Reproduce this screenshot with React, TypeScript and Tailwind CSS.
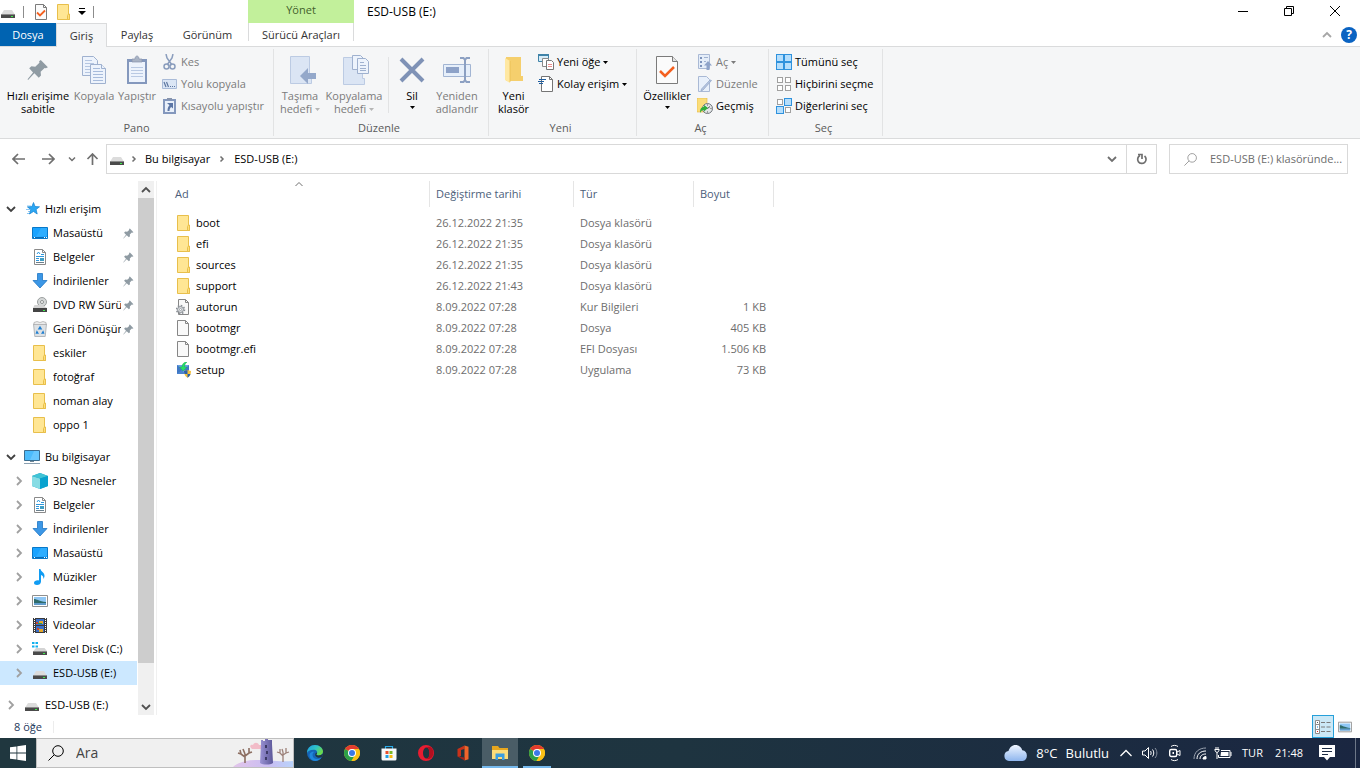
import React from 'react';

type IconProps = { className?: string };

/* ---------- File and tree icons ---------- */

const FolderIcon = ({ className = 'size-4' }: IconProps) => (
  <svg viewBox="0 0 16 16" className={className}>
    <path d="M1.500.5h11v10h1v5h-12z" fill="#ffe694" stroke="#e8bf4b" />
    <path d="M11.500 15.500v-4l1-1.500h1v5.500z" fill="#ffdf7b" stroke="#e8bf4b" />
  </svg>
);

const DriveIcon = ({ className = 'size-4' }: IconProps) => (
  <svg viewBox="0 0 16 16" className={className}>
    <path d="M4 6h8l2.500 4h-13z" fill="#dcdcdc" />
    <path d="M1 10h14v4H1z" fill="#4a4a4a" />
    <path d="M1 10h14v1H1z" fill="#8b8b8b" />
    <path d="M11 12h2v1h-2z" fill="#3ef04c" />
  </svg>
);

const LocalDiskIcon = () => (
  <svg viewBox="0 0 16 16" className="size-4">
    <path d="M0 1h2.500v2H0zM3.500 1H6v2H3.500zM0 4.500h2.500v2H0zM3.500 4.500H6v2H3.500z" fill="#12b0ee" />
    <path d="M4 7h8.500L15 10H1.500z" fill="#d4d4d4" />
    <path d="M1 10h14v4H1z" fill="#4a4a4a" />
    <path d="M1 10h14v1H1z" fill="#8b8b8b" />
    <path d="M11 12h2v1h-2z" fill="#3ef04c" />
  </svg>
);

const DvdIcon = () => (
  <svg viewBox="0 0 16 16" className="size-4">
    <circle cx="10" cy="5" r="4.500" fill="#d5d8d8" stroke="#9b9f9f" />
    <circle cx="10" cy="5" r="1.500" fill="#fff" stroke="#8d9191" />
    <path d="M2.500 8h8L15 11H1z" fill="#d4d4d4" />
    <path d="M1 11h14v4H1z" fill="#444" />
    <path d="M11 13h2v1h-2z" fill="#3ef04c" />
  </svg>
);

const StarIcon = () => (
  <svg viewBox="0 0 16 16" className="size-4">
    <path d="M3 5h4M2 8.500h4M3 12.500h3M4 10.500h2" stroke="#8cc8f3" />
    <path d="M9.500 1.500l1.500 4 4.500.3-3.400 2.700 1.100 4.500-3.700-2.500-4 2.500 1.300-4.500L3.500 6l4.400-.4z" fill="#2ba7f3" stroke="#1380d0" strokeWidth=".7" />
  </svg>
);

const DesktopIcon = () => (
  <svg viewBox="0 0 16 16" className="size-4">
    <path d="M.5 2.500h15v11H.5z" fill="#19a3ff" stroke="#0878c8" />
    <path d="M9 3h6v8L4 12z" fill="#3bb4ff" opacity=".6" />
    <path d="M1 12h14v1H1z" fill="#0a6bb5" />
    <path d="M2 12h1v1H2zM12 12h1v1h-1zM14 12h1v1h-1z" fill="#fff" />
  </svg>
);

const DocumentIcon = () => (
  <svg viewBox="0 0 16 16" className="size-4">
    <path d="M2.500.5h8l3 3v12h-11z" fill="#fff" stroke="#8a8a8a" />
    <path d="M10.500.5v3h3" fill="none" stroke="#8a8a8a" />
    <path d="M5 5l1.500-2L8 5M9 5.500h3M4 7.500h8M4 9.500h3M4 11.500h3" fill="none" stroke="#2f97dc" />
    <path d="M8 9h4v3H8z" fill="#3f9ec4" />
    <path d="M4 13.500h8" stroke="#6b7f8c" />
  </svg>
);

const DownloadIcon = () => (
  <svg viewBox="0 0 16 16" className="size-4">
    <path d="M5.500.5h5v7h4.500L8 15 1 7.500h4.500z" fill="#3c97e6" stroke="#1f76c4" strokeWidth=".8" />
  </svg>
);

const RecycleIcon = () => (
  <svg viewBox="0 0 16 16" className="size-4">
    <path d="M1.500 3h13l-1.300 12.500H2.800z" fill="#dde1e4" stroke="#a4aaaf" strokeWidth=".8" />
    <path d="M2 1.500l3-1 3 1 3-1 3 1v2H2z" fill="#ececec" stroke="#a8a8a8" strokeWidth=".7" />
    <path d="M8 4.800l2.300 3.700H5.700z" fill="#1f7fd1" />
    <path d="M4.800 9.300l2.200 3.500H3.500zM11.200 9.300L9 12.800h3.500z" fill="#1f7fd1" />
  </svg>
);

const ComputerIcon = () => (
  <svg viewBox="0 0 16 16" className="size-4">
    <path d="M.5 1.500h15v10H.5z" fill="#4cbcfc" stroke="#3c6d8f" />
    <path d="M10 2h5v9H6z" fill="#7bd0ff" opacity=".6" />
    <path d="M6 12h4v1H6z" fill="#718796" />
    <path d="M0 14h16v1H0z" fill="#8ba0b1" />
  </svg>
);

const CubeIcon = () => (
  <svg viewBox="0 0 16 16" className="size-4">
    <path d="M8 0l8 3v10l-8 3-8-3V3z" fill="#1d9fc0" />
    <path d="M0 3l8 2.500V16l-8-3z" fill="#87dce4" />
    <path d="M0 3l8-3 8 3-8 2.500z" fill="#41c4d6" />
    <path d="M8 5.500L16 3v10l-8 3z" fill="#08a2cf" />
  </svg>
);

const MusicIcon = () => (
  <svg viewBox="0 0 16 16" className="size-4">
    <path d="M7 0h1.500c.2 2.600 4.500 3.500 4 7.200-.1 1-.6 2-1.200 2.800.5-2.200-.8-3.600-2.300-4v6.500C9 15 7 16 5 16s-3-1-3-2.300C2 12 4.500 11 7 11.500z" fill="#109cf3" />
  </svg>
);

const PictureIcon = ({ className = 'size-4' }: IconProps) => (
  <svg viewBox="0 0 16 16" className={className}>
    <path d="M.5 2.500h15v11H.5z" fill="#fff" stroke="#8f8f8f" />
    <path d="M2 4h12v8H2z" fill="#8fc7f5" />
    <path d="M2 6c3 0 5 2.500 12 3v1H2z" fill="#2f6c6b" />
    <path d="M2 10h12v2H2z" fill="#5f9bcb" />
  </svg>
);

const VideoIcon = () => (
  <svg viewBox="0 0 16 16" className="size-4">
    <path d="M1 1h14v15H1z" fill="#3b3b3b" />
    <path d="M2.500 1v15M13.500 1v15" stroke="#fff" strokeDasharray="1 1" />
    <path d="M4 2h8v6H4z" fill="#3a6fca" />
    <path d="M4 9h8v6H4z" fill="#3a6fca" />
    <path d="M7 4h4v3H7z" fill="#e6a829" />
    <path d="M6 6h4v1H6z" fill="#2b9a4c" />
    <path d="M7 12h4v3H7z" fill="#e6a829" />
    <path d="M4 5h2v2H4zM5 11h2v2H5z" fill="#c8452d" />
  </svg>
);

const FileIcon = () => (
  <svg viewBox="0 0 16 16" className="size-4">
    <path d="M1.500.5h8l3 3v12h-11z" fill="#f9f9f9" stroke="#868686" />
    <path d="M9.500.5v3h3" fill="none" stroke="#868686" />
  </svg>
);

const ConfigFileIcon = () => (
  <svg viewBox="0 0 16 16" className="size-4">
    <path d="M2.500.5h7l3 3v12h-10z" fill="#f9f9f9" stroke="#868686" />
    <path d="M9.500.5v3h3" fill="none" stroke="#868686" />
    <circle cx="4.500" cy="10.500" r="4" fill="none" stroke="#8b9096" strokeWidth="1.500" strokeDasharray="1.600 1.500" />
    <circle cx="4.500" cy="10.500" r="3" fill="#d9dcde" stroke="#8b9096" />
    <circle cx="4.500" cy="10.500" r="1" fill="#fff" stroke="#8b9096" strokeWidth=".7" />
  </svg>
);

const SetupIcon = () => (
  <svg viewBox="0 0 16 16" className="size-4">
    <path d="M1 3h12v9H1z" fill="#6aa0e2" />
    <path d="M1 3l6 5-6 4zM13 3L8 8l5 4z" fill="#3f77c4" />
    <path d="M1 12l5-4 3 4z" fill="#4b83cf" />
    <path d="M11 0C8 0 6 2 6 5H3.500L7 9l4-4H8.500c0-2 1-4 2.500-5z" fill="#27dd68" stroke="#12a74a" strokeWidth=".4" />
    <path d="M8 9c1.500 0 2.500-.5 3.500-1.200C12.500 8.500 13.500 9 15 9c0 3-1 5.500-3.500 6.800C9 14.500 8 12 8 9z" fill="#f5c13c" />
    <path d="M8 9c1.500 0 2.500-.5 3.500-1.200V12h-3C8.100 11 8 10 8 9zM11.500 12h3c-.6 1.700-1.600 3-3 3.800z" fill="#2a62ac" />
  </svg>
);

const PinIcon = ({ className = 'size-3' }: IconProps) => (
  <svg viewBox="0 0 20 20" className={className} fill="#8f9ba3">
    <path d="M12.500 1l6.500 6.500-1.800 1-1.200-.4-3.600 3.500.3 3.400-2 2-4-4L1 19 .5 18.500l5-6.300-3.500-3.700 2-2 3.500.5L11.300 3.500 11 2z" />
  </svg>
);

const Chevron = ({ className = '' }: IconProps) => (
  <svg viewBox="0 0 10 10" className={`size-[10px] shrink-0 ${className}`} fill="none" stroke="currentColor" strokeWidth="1.800">
    <path d="M3 1l4 4-4 4" />
  </svg>
);

const Caret = ({ className = '' }: IconProps) => (
  <svg viewBox="0 0 5 3" className={`inline-block h-[3px] w-[5px] ${className}`} fill="currentColor">
    <path d="M0 0h5L2.500 3z" />
  </svg>
);

/* ---------- Ribbon icons ---------- */

const CheckDocIcon = ({ className = 'h-8 w-6' }: IconProps) => (
  <svg viewBox="0 0 24 32" className={className}>
    <path d="M1.500 2.500h16l5 5v22h-21z" fill="#fbfbfb" stroke="#7b7b7b" />
    <path d="M17.500 2.500v5h5" fill="#e4e4e4" stroke="#7b7b7b" />
    <path d="M5 17l5 5 9-9" fill="none" stroke="#f4601f" strokeWidth="2.500" />
  </svg>
);

const SmallCheckDocIcon = () => (
  <svg viewBox="0 0 14 16" className="h-4 w-[14px]">
    <path d="M1.500.5h8l3 3v12h-11z" fill="#fbfbfb" stroke="#7b7b7b" />
    <path d="M9.500.5v3h3" fill="none" stroke="#7b7b7b" />
    <path d="M3 8.500l3 3 5-5" fill="none" stroke="#f4601f" strokeWidth="1.800" />
  </svg>
);

const CopyIcon = () => (
  <svg viewBox="0 0 26 30" className="h-[30px] w-[26px]" fill="#edf3fc" stroke="#9fb1cf">
    <path d="M1.500 1.500h11l4 4v15h-15z" />
    <path d="M4 5.500h7M4 8.500h9M4 11.500h9M4 14.500h9M4 17.500h9" stroke="#b5c6e1" />
    <path d="M9.500 9.500h11l4 4v15h-15z" />
    <path d="M20.500 9.500v4h4" />
    <path d="M12 13.500h7M12 16.500h10M12 19.500h10M12 22.500h10M12 25.500h10" stroke="#a7bbdb" />
  </svg>
);

const PasteIcon = () => (
  <svg viewBox="0 0 22 30" className="h-[30px] w-[22px]">
    <path d="M1 4h20v25H1z" fill="#8498bd" />
    <path d="M3 7h16v20H3z" fill="#edf3fc" />
    <path d="M5 12.500h12M5 15.500h12M5 18.500h12M5 21.500h12" stroke="#b9c9e3" />
    <path d="M6 7V4h3c0-4 4-4 4 0h3v3z" fill="#a9b3c4" stroke="#8794ad" strokeWidth=".7" />
  </svg>
);

const CutIcon = () => (
  <svg viewBox="0 0 16 16" className="size-4" fill="none" stroke="#8a9dbd" strokeWidth="1.500">
    <path d="M4 0l1 4 5 7M11 0l-1 4-5 7" />
    <circle cx="4.500" cy="12.500" r="2.500" />
    <circle cx="10.500" cy="12.500" r="2.500" />
  </svg>
);

const CopyPathIcon = () => (
  <svg viewBox="0 0 16 16" className="size-4">
    <path d="M.5 3.500h14v9H.5z" fill="#dbe6f5" stroke="#a9bbd8" />
    <path d="M2 6l2 5M4.500 6l2 5" stroke="#5d769f" strokeWidth="1.200" />
    <path d="M8 10h1v1H8zM10 10h1v1h-1zM12 10h1v1h-1z" fill="#5d769f" />
  </svg>
);

const PasteShortcutIcon = () => (
  <svg viewBox="0 0 16 16" className="size-4">
    <path d="M1 1h13v15H1z" fill="#8498bd" />
    <path d="M3 3h9v11H3z" fill="#e9f0fa" />
    <path d="M5 0h5v2H5z" fill="#8794ad" />
    <path d="M5 5h6v5.500L9.200 9C8 10 7.500 11 7.500 13H5.500c0-3 .8-4.500 2-5.700z" fill="#5c76a5" />
  </svg>
);

const MoveToIcon = () => (
  <svg viewBox="0 0 28 30" className="h-[30px] w-7">
    <path d="M2.500 1.500h19v21h2v6h-21z" fill="#dbe5f4" stroke="#bccbe3" />
    <path d="M28 18h-8v-5l-8 8 8 8v-5h8z" fill="#94a8ca" />
  </svg>
);

const CopyToIcon = () => (
  <svg viewBox="0 0 28 32" className="h-8 w-7">
    <path d="M1.500 3.500h19v21h2v6h-21z" fill="#dbe5f4" stroke="#bccbe3" />
    <path d="M10.500 1.500h8l3 3v11h-11z" fill="#edf3fc" stroke="#9fb1cf" />
    <path d="M15.500 4.500h8l3 3v12h-11z" fill="#edf3fc" stroke="#9fb1cf" />
    <path d="M18 8.500h4M18 11.500h6M18 14.500h6M18 16.500h6" stroke="#9fb1cf" />
  </svg>
);

const DeleteIcon = () => (
  <svg viewBox="0 0 26 26" className="size-[26px]">
    <path d="M2 2l22 22M24 2L2 24" stroke="#7f92b6" strokeWidth="4" />
  </svg>
);

const RenameIcon = () => (
  <svg viewBox="0 0 30 28" className="h-7 w-[30px]">
    <path d="M1.500 8.500h27v12h-27z" fill="#e6effa" stroke="#a2b5d3" />
    <path d="M4 11h13v6H4z" fill="#8da2c8" />
    <path d="M18 2h3.500l1.500 2 1.500-2H28M23 3v22M18 26h3.500l1.500-2 1.500 2H28" fill="none" stroke="#8ca0c2" strokeWidth="2" />
  </svg>
);

const NewFolderIcon = () => (
  <svg viewBox="0 0 20 30" className="h-[30px] w-5">
    <path d="M2 2h15v19h2v5H2z" fill="#f5cf6d" />
    <path d="M1 3l5 3v22l-5-3z" fill="#ffe8a2" />
    <path d="M6 6v21" stroke="#e7b94b" strokeWidth=".7" />
  </svg>
);

const NewItemIcon = () => (
  <svg viewBox="0 0 16 16" className="size-4">
    <path d="M.5.500h10v7H.5z" fill="#d6ecf8" stroke="#3f83a8" />
    <path d="M0 0h11v2H0z" fill="#3f83a8" />
    <path d="M4.500 4.500h6v8h-6z" fill="#fff" stroke="#8a8a8a" />
    <path d="M8.500 6.500h5l2 2v7h-7z" fill="#fff" stroke="#777" />
    <path d="M10 10.500h4M10 12.500h4" stroke="#ea8e8e" />
  </svg>
);

const EasyAccessIcon = () => (
  <svg viewBox="0 0 16 16" className="size-4">
    <path d="M3.500.5h8l3 3v12h-11z" fill="#fff" stroke="#757575" />
    <path d="M11.500.5v3h3" fill="none" stroke="#757575" />
    <path d="M1 3.500h7M0 5.500h6M1 7.500h4" stroke="#1f5e9f" strokeWidth="1.200" />
  </svg>
);

const OpenIcon = () => (
  <svg viewBox="0 0 16 16" className="size-4">
    <path d="M1.500.5h11v14h-11z" fill="#e4edf9" stroke="#a9b9d5" />
    <path d="M3 3h2v2H3zM3 7h2v2H3zM3 11h2v2H3z" fill="#7d93bb" />
    <path d="M7 3.500h4M7 7.500h2" stroke="#9fb1cf" />
    <path d="M9.500 16v-4.500H7L11 7l4 4.500h-2.500V16z" fill="#8ea3c9" />
  </svg>
);

const EditIcon = () => (
  <svg viewBox="0 0 16 16" className="size-4">
    <path d="M1.500.5h8l3 3v12h-11z" fill="#e8f0fb" stroke="#a9b9d5" />
    <path d="M14.500 4.500L6 14l-2 1 .5-2L13 4z" fill="#b7c6e0" stroke="#94a8ca" strokeWidth=".8" />
  </svg>
);

const HistoryIcon = () => (
  <svg viewBox="0 0 16 16" className="size-4">
    <path d="M0 0h10v9h2v5H0z" fill="#fbdd79" stroke="#e0b544" strokeWidth=".6" />
    <circle cx="10.500" cy="10.500" r="5" fill="#e3e6e8" stroke="#71777c" />
    <path d="M10.500 10.500l2.500-2M10.500 10.500L8 9M10.500 6.500v1M10.500 13.500v1M13.500 10.500h1" stroke="#555" />
    <path d="M3 15c0-4 1-6 4-6V7l4 3-4 3.500V12c-2 0-3 1-4 3z" fill="#2eae3a" />
  </svg>
);

const SelectGridIcon = ({ selected }: { selected: boolean[] }) => {
  const spots = [
    [1, 1],
    [9, 1],
    [1, 9],
    [9, 9],
  ];
  return (
    <svg viewBox="0 0 16 16" className="size-4">
      {spots.map(([x, y], i) =>
        selected[i] ? (
          <rect key={i} x={x - 0.5} y={y - 0.5} width="7" height="7" fill="#b5defc" stroke="#2f92dd" />
        ) : (
          <rect key={i} x={x + 0.5} y={y + 0.5} width="5" height="5" fill="#fff" stroke="#a0a0a0" />
        ),
      )}
    </svg>
  );
};

/* ---------- Taskbar icons ---------- */

const EdgeIcon = () => (
  <svg viewBox="0 0 16 16" className="size-4">
    <defs>
      <linearGradient id="edgeTop" x1="0" y1="0" x2="1" y2=".5">
        <stop offset="0" stopColor="#1f9fe0" />
        <stop offset=".55" stopColor="#2fc3c6" />
        <stop offset="1" stopColor="#6bdc4c" />
      </linearGradient>
    </defs>
    <circle cx="8" cy="8" r="8" fill="#1565b8" />
    <path d="M0 8C0 3.500 3.500 0 8 0s8 3 8 6.500c0 2.500-2 4-4.500 4-2 0-2.500-.8-1.700-1.700C11 7 9.500 4.800 6.500 4.800 3 4.800.5 6.500 0 8z" fill="url(#edgeTop)" />
    <path d="M6 8c-1.500 3 .8 6 4 6 2 0 3.500-.6 4.700-2-1.500 3-5 4.300-8 3.800C3.500 15 1.500 11 3 8.500 4 7 6 6.500 7.500 7 6.500 7.200 6.200 7.500 6 8z" fill="#1f88dc" />
    <path d="M9.800 8.800c-.8 1-.3 1.700 1.700 1.700 1.600 0 3.300-.7 4.500-2-.1 1.500-.5 2.500-1.300 3.500-3 1.500-6.500.3-6.500-2.200 0-1 .5-1.800 1.200-2.300.6.400.8.8.4 1.300z" fill="#203740" />
  </svg>
);

const ChromeIcon = () => (
  <svg viewBox="0 0 16 16" className="size-4">
    <circle cx="8" cy="8" r="8" fill="#fbc116" />
    <path d="M8 8L1.100 4A8 8 0 0 1 14.900 4z" fill="#e33b2e" />
    <path d="M8 8L1.100 4a8 8 0 0 0 6.400 12L11 9.800z" fill="#2b9f48" />
    <path d="M8 4h6.900a8 8 0 0 1-7.400 12L11.400 10z" fill="#fbc116" />
    <circle cx="8" cy="8" r="4" fill="#fff" />
    <circle cx="8" cy="8" r="3" fill="#3b78e7" />
  </svg>
);

const StoreIcon = () => (
  <svg viewBox="0 0 16 16" className="size-4">
    <path d="M4.500 4V1.500h7V4" fill="none" stroke="#29abe8" strokeWidth="1.200" />
    <path d="M.5 3.500h15V14a1.500 1.500 0 0 1-1.500 1.500H2A1.500 1.500 0 0 1 .5 14z" fill="#f6f8fa" />
    <path d="M4.500 6h3v3h-3z" fill="#e94f2c" />
    <path d="M8.500 6h3v3h-3z" fill="#7db928" />
    <path d="M4.500 10h3v3h-3z" fill="#20a0e6" />
    <path d="M8.500 10h3v3h-3z" fill="#fbb90f" />
  </svg>
);

const OperaIcon = () => (
  <svg viewBox="0 0 16 16" className="size-4">
    <path fillRule="evenodd" d="M8 0a8 8 0 1 0 0 16A8 8 0 0 0 8 0zm.5 2.500c2 0 3 2.500 3 5.500s-1 5.500-3 5.500S5 11 5 8s1.500-5.500 3.500-5.500z" fill="#e81c31" />
    <path d="M8.500 2.500C11 .8 13.500 2 14.500 4c1.500 3 1 7-1.500 9-1.500 1.300-3 1.300-4.500.5 2 0 3-2.500 3-5.500s-1-5.500-3-5.500z" fill="#b30f1f" />
  </svg>
);

const OfficeIcon = () => (
  <svg viewBox="0 0 16 16" className="size-4">
    <path d="M2.500 4L9.500.500V4L6 5v6l-2 1-1.500-.6z" fill="#c8321a" />
    <path d="M9.500.5l4 1.300v12.400l-4 1.300z" fill="#f0642a" />
    <path d="M2.500 11.400l7 1.100v3z" fill="#a3231b" />
  </svg>
);

const ExplorerIcon = () => (
  <svg viewBox="0 0 18 16" className="h-4 w-[18px]">
    <path d="M1 1h6l1.500 2H17v11H1z" fill="#e6a61e" />
    <path d="M1 5h16v9H1z" fill="#fddc78" />
    <path d="M4.500 8.500h9V15H11v-3H7v3H4.500z" fill="#3c9ee0" />
  </svg>
);

const SearchArt = () => (
  <svg viewBox="0 0 60 28" className="h-7 w-[60px] shrink-0">
    <defs>
      <linearGradient id="hill" x1="0" y1="0" x2="1" y2="0">
        <stop offset="0" stopColor="#e2c5ea" />
        <stop offset=".6" stopColor="#c9bdf2" />
        <stop offset="1" stopColor="#b9d3fb" />
      </linearGradient>
      <linearGradient id="tower" x1="0" y1="0" x2="1" y2="0">
        <stop offset="0" stopColor="#9a92d4" />
        <stop offset="1" stopColor="#5c5899" />
      </linearGradient>
    </defs>
    <path d="M0 28c4-4 12-7 24-7s20 2 36 1v6z" fill="url(#hill)" />
    <path d="M18 9c-2-2 0-4 2-3 1-3 5-3 6 0h4v4H19z" fill="#f2bcc8" />
    <path d="M28 1h2v1h2V0h3v1h2V1h2v4l1 19c-3 2-10 2-13 0l1-19z" fill="url(#tower)" />
    <path d="M32 6h2v3h-2zM33 12h2v3h-2zM32 18h2v3h-2z" fill="#3d3a66" />
    <path d="M12 24v-9M12 18l-4-3-3-1M8 15l-1-4M12 17l4-3 3-1M16 14V9M12 15l-2-5" fill="none" stroke="#8d6f62" strokeWidth="1.600" />
    <path d="M50 23V13M50 17l-3-3-3-1M47 14l0-4M50 16l3-2 3-1M53 14V9M50 13l-1-3" fill="none" stroke="#9c8078" strokeWidth="1.300" />
  </svg>
);

const CloudIcon = () => (
  <svg viewBox="0 0 24 16" className="h-4 w-6">
    <defs>
      <linearGradient id="cloud" x1="0" y1="0" x2="0" y2="1">
        <stop offset="0" stopColor="#eef5ff" />
        <stop offset="1" stopColor="#8fb6ee" />
      </linearGradient>
    </defs>
    <path d="M5 16a5 5 0 0 1-.5-9.900C5.500 2.500 8 0 11.500 0c3.500 0 6 2.300 6.800 5.200A5.500 5.500 0 0 1 18.500 16z" fill="url(#cloud)" />
  </svg>
);

const VolumeIcon = () => (
  <svg viewBox="0 0 18 16" className="h-4 w-[18px]" fill="none" stroke="#fff">
    <path d="M1.500 6v4h2.500l3.500 3.500v-11L4 6z" />
    <path d="M9.500 6c.8 1 .8 3 0 4M11.500 4.500c1.700 2 1.700 5 0 7" />
    <path d="M14 3c2.500 3 2.500 7 0 10" stroke="#8b94a2" />
  </svg>
);

const MeetIcon = () => (
  <svg viewBox="0 0 12 18" className="h-[18px] w-3" fill="none" stroke="#fff">
    <path d="M2 2.500c2-1.500 5-1.500 7 0M2 15.500c2 1.500 5 1.500 7 0" />
    <rect x=".7" y="5.500" width="7" height="7" rx="1.500" strokeWidth="1.400" />
    <path d="M8 8l3-1.500v5L8 10" />
    <path d="M3.500 8h1.500v2H3.500z" fill="#fff" stroke="none" />
  </svg>
);

const WifiIcon = () => (
  <svg viewBox="0 0 14 14" className="size-[14px]" fill="none" stroke="#fff">
    <path d="M1 13C1 6 6 2 13 2" stroke="#9aa3b0" />
    <path d="M4 13c0-5 3.500-8 9-8M7 13c0-3 2-5 6-5" />
    <path d="M10 13c0-1.500 1-2.500 3-2.500V13z" fill="#fff" />
  </svg>
);

const BatteryIcon = () => (
  <svg viewBox="0 0 18 12" className="h-3 w-[18px]" fill="none" stroke="#fff">
    <path d="M7 3.500h9v7H4.500V8" />
    <path d="M17 5v4" />
    <path d="M7 5h7.500v4H6.500z" fill="#fff" stroke="none" />
    <path d="M2 0v2M4 0v2M.5 2.500h5M1 3c0 3 4 3 4 0M3 5v7" />
  </svg>
);

const NoticeIcon = () => (
  <svg viewBox="0 0 16 16" className="size-4">
    <path d="M0 0h16v12h-5l-3 3.500L5 12H0z" fill="#fff" />
    <path d="M3 3.500h10M3 6.500h10M3 9.500h6" stroke="#1b2a43" />
  </svg>
);

const Magnifier = ({ className = 'size-3' }: IconProps) => (
  <svg viewBox="0 0 16 16" className={className} fill="none" stroke="currentColor">
    <circle cx="10" cy="6" r="5.300" />
    <path d="M6.200 9.800L.5 15.500" />
  </svg>
);

/* ---------- Ribbon parts ---------- */

type RibbonButtonProps = {
  icon: React.ReactNode;
  label: React.ReactNode;
  disabled?: boolean;
  caret?: boolean;
  className?: string;
};

const BigButton = ({ icon, label, disabled, className = '' }: RibbonButtonProps) => (
  <button
    disabled={disabled}
    className={`flex shrink-0 flex-col items-center whitespace-nowrap leading-[13px] disabled:text-[#7b7b7b] ${className}`}
  >
    <span className="flex h-[38px] items-center">{icon}</span>
    {label}
  </button>
);

const SmallButton = ({ icon, label, disabled, caret }: RibbonButtonProps) => (
  <button disabled={disabled} className="flex h-[22px] items-center gap-[3px] whitespace-nowrap disabled:text-[#7b7b7b]">
    {icon}
    <span>{label}</span>
    {caret && <Caret />}
  </button>
);

type GroupProps = { title: string; className?: string; children: React.ReactNode };

const RibbonGroup = ({ title, className = '', children }: GroupProps) => (
  <section className={`flex shrink-0 flex-col border-r border-[#e2e3e4] ${className}`}>
    <div className="flex h-[72px] items-start pt-[2px]">{children}</div>
    <h2 className="pr-1 pt-px text-center leading-4 text-[#5a5a5a]">{title}</h2>
  </section>
);

const Ribbon = () => (
  <div className="flex h-[92px] shrink-0 overflow-hidden border-b border-[#dadbdc] bg-[#f5f6f7] py-[2px]">
    <RibbonGroup title="Pano" className="w-[274px] pl-1">
      <BigButton className="w-[68px]" icon={<PinIcon className="size-[22px]" />} label={<>Hızlı erişime<br />sabitle</>} />
      <BigButton className="w-[44px]" disabled icon={<CopyIcon />} label="Kopyala" />
      <BigButton className="w-[42px]" disabled icon={<PasteIcon />} label="Yapıştır" />
      <div className="flex flex-col pl-1">
        <SmallButton disabled icon={<CutIcon />} label="Kes" />
        <SmallButton disabled icon={<CopyPathIcon />} label="Yolu kopyala" />
        <SmallButton disabled icon={<PasteShortcutIcon />} label="Kısayolu yapıştır" />
      </div>
    </RibbonGroup>

    <RibbonGroup title="Düzenle" className="w-[215px]">
      <BigButton className="w-[52px]" disabled icon={<span className="pl-1"><MoveToIcon /></span>} label={<>Taşıma<br /><span>hedefi <Caret className="mb-[2px] text-[#b5b5b5]" /></span></>} />
      <BigButton className="w-[56px]" disabled icon={<span className="pl-1"><CopyToIcon /></span>} label={<>Kopyalama<br /><span>hedefi <Caret className="mb-[2px] text-[#b5b5b5]" /></span></>} />
      <div className="mx-[6px] h-14 w-px self-center bg-[#e2e3e4]" />
      <BigButton className="w-[34px]" icon={<DeleteIcon />} label={<>Sil<Caret className="mt-1" /></>} />
      <BigButton className="w-[56px]" disabled icon={<RenameIcon />} label={<>Yeniden<br />adlandır</>} />
    </RibbonGroup>

    <RibbonGroup title="Yeni" className="w-[148px]">
      <BigButton className="w-[49px]" icon={<NewFolderIcon />} label={<>Yeni<br />klasör</>} />
      <div className="flex flex-col">
        <SmallButton caret icon={<NewItemIcon />} label="Yeni öğe" />
        <SmallButton caret icon={<EasyAccessIcon />} label="Kolay erişim" />
      </div>
    </RibbonGroup>

    <RibbonGroup title="Aç" className="w-[132px]">
      <BigButton className="w-[60px]" icon={<CheckDocIcon />} label={<>Özellikler<Caret className="mt-1" /></>} />
      <div className="flex flex-col">
        <SmallButton disabled caret icon={<OpenIcon />} label="Aç" />
        <SmallButton disabled icon={<EditIcon />} label="Düzenle" />
        <SmallButton icon={<HistoryIcon />} label="Geçmiş" />
      </div>
    </RibbonGroup>

    <RibbonGroup title="Seç" className="w-[114px]">
      <div className="flex flex-col pl-[7px]">
        <SmallButton icon={<SelectGridIcon selected={[true, true, true, true]} />} label="Tümünü seç" />
        <SmallButton icon={<SelectGridIcon selected={[false, false, false, false]} />} label="Hiçbirini seçme" />
        <SmallButton icon={<SelectGridIcon selected={[false, true, true, false]} />} label="Diğerlerini seç" />
      </div>
    </RibbonGroup>
  </div>
);

/* ---------- Title bar and tabs ---------- */

const Header = () => (
  <header className="flex shrink-0">
    <div className="w-[248px] shrink-0">
      <div className="flex h-[23px] items-center">
        <DriveIcon />
        <span className="mx-[7px] h-3 w-px bg-[#8c8c8c]" />
        <button aria-label="Özellikler" className="ml-[3px]"><SmallCheckDocIcon /></button>
        <button aria-label="Yeni klasör" className="ml-2"><FolderIcon /></button>
        <button aria-label="Özelleştir" className="ml-[6px]">
          <svg viewBox="0 0 8 7" className="h-[7px] w-2"><path d="M1 0h6v1H1zM0 3h8L4 7z" /></svg>
        </button>
        <span className="ml-[7px] h-3 w-px bg-[#8c8c8c]" />
      </div>
      <div className="flex h-6 text-[#333]">
        <button className="w-14 border-b border-[#dadbdc] bg-[#0063b1] text-white">Dosya</button>
        <button className="w-[51px] border-x border-t border-[#dadbdc] bg-[#f5f6f7]">Giriş</button>
        <button className="w-[60px] border-b border-[#dadbdc]">Paylaş</button>
        <button className="flex-1 border-b border-[#dadbdc]">Görünüm</button>
      </div>
    </div>

    <div className="w-[106px] shrink-0">
      <div className="h-[23px] bg-[#c2f09b] text-center leading-5 text-[#42612c]">Yönet</div>
      <div className="h-6 border-b border-[#dadbdc]">
        <button className="block h-[18px] w-full border-x border-[#dadbdc] pt-1 leading-4 text-[#333]">Sürücü Araçları</button>
      </div>
    </div>

    <div className="flex-1 border-b border-[#dadbdc]">
      <div className="flex h-[23px] justify-between">
        <h1 className="pl-[13px] text-xs leading-[23px]">ESD-USB (E:)</h1>
        <div className="flex pr-[2px] pb-[2px]">
          <button aria-label="Simge durumuna küçült" className="flex w-[46px] items-center justify-center">
            <svg viewBox="0 0 10 10" className="size-[10px]"><path d="M0 5.500h10" stroke="#000" /></svg>
          </button>
          <button aria-label="Önceki boyut" className="flex w-[46px] items-center justify-center">
            <svg viewBox="0 0 10 10" className="size-[10px]" fill="none" stroke="#000"><path d="M.5 2.500h7v7h-7zM2.500 2.500v-2h7v7h-2" /></svg>
          </button>
          <button aria-label="Kapat" className="flex w-[46px] items-center justify-center">
            <svg viewBox="0 0 10 10" className="size-[10px]" stroke="#000"><path d="M0 0l10 10M10 0L0 10" /></svg>
          </button>
        </div>
      </div>
      <div className="flex h-[23px] items-center justify-end gap-[9px] pr-[3px]">
        <button aria-label="Şeridi küçült"><Chevron className="-rotate-90 text-[#a6a6a6]" /></button>
        <button aria-label="Yardım" className="size-4 rounded-full bg-[#0a63c2] text-xs font-bold leading-4 text-white">?</button>
      </div>
    </div>
  </header>
);

/* ---------- Address bar ---------- */

const arrowClass = 'h-3 w-[13px]';

const AddressBar = () => (
  <div className="flex h-[42px] shrink-0 items-center px-3 pb-[2px]">
    <nav className="flex w-[94px] shrink-0 items-center text-[#6f6f6f]">
      <button aria-label="Geri" className="mr-[17px]">
        <svg viewBox="0 0 13 12" className={arrowClass} fill="none" stroke="currentColor" strokeWidth="1.700"><path d="M6 1L1 6l5 5M1 6h12" /></svg>
      </button>
      <button aria-label="İleri" className="mr-[13px]">
        <svg viewBox="0 0 13 12" className={arrowClass} fill="none" stroke="currentColor" strokeWidth="1.700"><path d="M7 1l5 5-5 5M12 6H0" /></svg>
      </button>
      <button aria-label="Son konumlar" className="mr-[10px]">
        <svg viewBox="0 0 8 8" className="size-2" fill="none" stroke="currentColor" strokeWidth="1.500"><path d="M1 2.500l3 3 3-3" /></svg>
      </button>
      <button aria-label="Yukarı">
        <svg viewBox="0 0 13 12" className={arrowClass} fill="none" stroke="currentColor" strokeWidth="1.700"><path d="M1.500 6l5-5 5 5M6.500 1v11" /></svg>
      </button>
    </nav>
    <div className="flex h-[30px] min-w-0 flex-1 items-center border border-[#d9d9d9] pl-[2px]">
      <DriveIcon />
      <svg viewBox="0 0 8 8" className="ml-[5px] size-2" fill="none" stroke="#6f6f6f" strokeWidth="1.500"><path d="M2.500 1.500L5 4 2.500 6.500" /></svg>
      <a href="#pc" className="ml-[7px]">Bu bilgisayar</a>
      <svg viewBox="0 0 8 8" className="ml-2 size-2" fill="none" stroke="#6f6f6f" strokeWidth="1.500"><path d="M2.500 1.500L5 4 2.500 6.500" /></svg>
      <a href="#usb" className="ml-2">ESD-USB (E:)</a>
      <button aria-label="Önceki konumlar" className="ml-auto flex w-[29px] justify-center">
        <Chevron className="rotate-90 text-[#6f6f6f]" />
      </button>
      <button aria-label="Yenile" className="flex h-full w-[30px] items-center justify-center border-l border-[#d9d9d9]">
        <svg viewBox="0 0 12 12" className="size-3" fill="none" stroke="#6f6f6f" strokeWidth="1.700">
          <path d="M4 2.500A4.200 4.200 0 1 0 8.500 3M2 1.500h4V6" />
        </svg>
      </button>
    </div>
    <label className="ml-3 flex h-[30px] w-[179px] shrink-0 items-center gap-[13px] border border-[#d9d9d9] pl-[14px] text-[#8a8a8a]">
      <Magnifier className="size-[13px] shrink-0" />
      <input aria-label="Ara" placeholder="ESD-USB (E:) klasöründe..." className="min-w-0 flex-1 outline-none placeholder:text-[#6d6d6d]" />
    </label>
  </div>
);

/* ---------- Navigation tree ---------- */

type TreeItem = { name: string; icon: React.ReactNode; pinned?: boolean; selected?: boolean };

const quickAccess: TreeItem[] = [
  { name: 'Masaüstü', icon: <DesktopIcon />, pinned: true },
  { name: 'Belgeler', icon: <DocumentIcon />, pinned: true },
  { name: 'İndirilenler', icon: <DownloadIcon />, pinned: true },
  { name: 'DVD RW Sürücüsü', icon: <DvdIcon />, pinned: true },
  { name: 'Geri Dönüşüm Kutusu', icon: <RecycleIcon />, pinned: true },
  { name: 'eskiler', icon: <FolderIcon /> },
  { name: 'fotoğraf', icon: <FolderIcon /> },
  { name: 'noman alay', icon: <FolderIcon /> },
  { name: 'oppo 1', icon: <FolderIcon /> },
];

const computer: TreeItem[] = [
  { name: '3D Nesneler', icon: <CubeIcon /> },
  { name: 'Belgeler', icon: <DocumentIcon /> },
  { name: 'İndirilenler', icon: <DownloadIcon /> },
  { name: 'Masaüstü', icon: <DesktopIcon /> },
  { name: 'Müzikler', icon: <MusicIcon /> },
  { name: 'Resimler', icon: <PictureIcon /> },
  { name: 'Videolar', icon: <VideoIcon /> },
  { name: 'Yerel Disk (C:)', icon: <LocalDiskIcon /> },
  { name: 'ESD-USB (E:)', icon: <DriveIcon />, selected: true },
];

const TreeRoot = ({ name, icon, open }: { name: string; icon: React.ReactNode; open?: boolean }) => (
  <button className="flex h-6 w-full items-center pl-[6px]">
    <Chevron className={open ? 'rotate-90 text-[#404040]' : 'text-[#a0a0a0]'} />
    <span className="ml-2 mr-[5px] shrink-0">{icon}</span>
    {name}
  </button>
);

const TreeRow = ({ item, expandable }: { item: TreeItem; expandable?: boolean }) => (
  <li>
    <button className={`flex h-6 w-full items-center pl-[14px] pr-[3px] text-left ${item.selected ? 'bg-[#cce8ff]' : ''}`}>
      <Chevron className={expandable ? 'text-[#a0a0a0]' : 'invisible'} />
      <span className="ml-2 mr-[5px] shrink-0">{item.icon}</span>
      <span className="min-w-0 flex-1 overflow-hidden whitespace-nowrap">{item.name}</span>
      {item.pinned && <PinIcon className="ml-[2px] size-[11px] shrink-0" />}
    </button>
  </li>
);

const Sidebar = () => (
  <aside className="flex w-[157px] shrink-0 border-r border-[#f0f0f0]">
    <div className="w-[137px] overflow-hidden pt-4">
      <TreeRoot open name="Hızlı erişim" icon={<StarIcon />} />
      <ul>
        {quickAccess.map((item) => (
          <TreeRow key={item.name} item={item} />
        ))}
      </ul>
      <div className="mt-2">
        <TreeRoot open name="Bu bilgisayar" icon={<ComputerIcon />} />
        <ul>
          {computer.map((item) => (
            <TreeRow key={item.name} item={item} expandable />
          ))}
        </ul>
      </div>
      <div className="mt-2">
        <TreeRoot name="ESD-USB (E:)" icon={<DriveIcon />} />
      </div>
    </div>
    {/* Scrollbar */}
    <div className="ml-px flex w-4 flex-col bg-[#f0f0f0] text-[#505050]">
      <button aria-label="Yukarı kaydır" className="flex h-[17px] items-center justify-center">
        <Chevron className="-rotate-90" />
      </button>
      <div className="flex flex-1 flex-col">
        <div className="basis-[93%] bg-[#cdcdcd]" />
      </div>
      <button aria-label="Aşağı kaydır" className="flex h-[17px] items-center justify-center">
        <Chevron className="rotate-90" />
      </button>
    </div>
  </aside>
);

/* ---------- File list ---------- */

const files = [
  { name: 'boot', date: '26.12.2022 21:35', type: 'Dosya klasörü', size: '', icon: <FolderIcon /> },
  { name: 'efi', date: '26.12.2022 21:35', type: 'Dosya klasörü', size: '', icon: <FolderIcon /> },
  { name: 'sources', date: '26.12.2022 21:35', type: 'Dosya klasörü', size: '', icon: <FolderIcon /> },
  { name: 'support', date: '26.12.2022 21:43', type: 'Dosya klasörü', size: '', icon: <FolderIcon /> },
  { name: 'autorun', date: '8.09.2022 07:28', type: 'Kur Bilgileri', size: '1 KB', icon: <ConfigFileIcon /> },
  { name: 'bootmgr', date: '8.09.2022 07:28', type: 'Dosya', size: '405 KB', icon: <FileIcon /> },
  { name: 'bootmgr.efi', date: '8.09.2022 07:28', type: 'EFI Dosyası', size: '1.506 KB', icon: <FileIcon /> },
  { name: 'setup', date: '8.09.2022 07:28', type: 'Uygulama', size: '73 KB', icon: <SetupIcon /> },
];

const thClass = 'border-r border-[#e5e5e5] pl-[6px] text-left font-normal';

const FileList = () => (
  <main className="min-w-0 flex-1 overflow-auto">
    <table className="w-[617px] border-separate border-spacing-0 table-fixed text-[#6d6d6d]">
      <colgroup>
        <col className="w-[273px]" />
        <col className="w-[144px]" />
        <col className="w-[120px]" />
        <col className="w-[80px]" />
      </colgroup>
      <thead className="text-[#4c607a]">
        <tr className="h-[26px]">
          <th className="relative border-r border-[#e5e5e5] pl-[18px] text-left font-normal">
            Ad
            <svg viewBox="0 0 8 4" className="absolute left-[138px] top-px h-1 w-2" fill="none" stroke="#6f6f6f"><path d="M.5 4L4 .5 7.500 4" /></svg>
          </th>
          <th className={thClass}>Değiştirme tarihi</th>
          <th className={thClass}>Tür</th>
          <th className={thClass}>Boyut</th>
        </tr>
      </thead>
      <tbody className="before:block before:h-[5px]">
        {files.map((file) => (
          <tr key={file.name} className="h-[21px]">
            <td className="pl-[19px] text-black">
              <span className="flex items-center gap-1">
                {file.icon}
                {file.name}
              </span>
            </td>
            <td className="pl-[6px]">{file.date}</td>
            <td className="pl-[6px]">{file.type}</td>
            <td className="pr-2 text-right">{file.size}</td>
          </tr>
        ))}
      </tbody>
    </table>
  </main>
);

const StatusBar = () => (
  <footer className="flex h-[23px] shrink-0 items-center pl-[14px] pr-2 text-[#1e395b]">
    <span className="w-[39px]">8 öğe</span>
    <span className="h-3 w-px bg-[#ececec]" />
    <button aria-label="Ayrıntılar" className="ml-auto flex h-[23px] w-[22px] items-center justify-center border border-[#26a0da] bg-[#cbe8f6]">
      <svg viewBox="0 0 16 14" className="h-[14px] w-4" fill="none">
        <path d="M.5.5h4v13h-4zM.5 4.500h4M.5 9.500h4" fill="#fff" stroke="#8c8c8c" />
        <path d="M6 2.500h4M11.500 2.500h4M6 7h4M11.500 7h4M6 11.500h4M11.500 11.500h4" stroke="#7a7a7a" />
        <path d="M2 2h1v1H2z" fill="#555" />
        <path d="M2 6.500h1v1H2z" fill="#0c7fd8" />
        <path d="M2 11h1v1H2z" fill="#d22" />
      </svg>
    </button>
    <button aria-label="Büyük simgeler" className="ml-1">
      <PictureIcon className="size-[14px]" />
    </button>
  </footer>
);

/* ---------- Taskbar ---------- */

const apps = [
  { name: 'Edge', icon: <EdgeIcon /> },
  { name: 'Chrome', icon: <ChromeIcon /> },
  { name: 'Store', icon: <StoreIcon /> },
  { name: 'Opera', icon: <OperaIcon /> },
  { name: 'Office', icon: <OfficeIcon /> },
];

const Taskbar = () => (
  <div className="flex h-[30px] shrink-0 items-center bg-linear-to-r from-[#20373f] via-[#1e3440] to-[#1a2641] text-white">
    <button aria-label="Başlat" className="flex h-full w-9 items-center justify-center">
      <svg viewBox="0 0 16 16" className="size-4" fill="#fff">
        <path d="M0 2.300L6.500 1.400v6.200H0zM7.300 1.300L16 0v7.600H7.300zM0 8.400h6.500v6.200L0 13.700zM7.300 8.400H16V16l-8.700-1.300z" />
      </svg>
    </button>
    <label className="flex h-full w-[258px] shrink-0 items-center border border-[#bfbfbf] bg-[#f0f0f0] pl-[11px] text-black">
      <Magnifier className="size-4 shrink-0" />
      <input aria-label="Ara" placeholder="Ara" className="ml-3 min-w-0 flex-1 text-sm outline-none placeholder:text-[#444]" />
      <SearchArt />
    </label>
    <div className="ml-[3px] flex h-full gap-px">
      {apps.map((app) => (
        <button key={app.name} aria-label={app.name} className="flex w-9 items-center justify-center">
          {app.icon}
        </button>
      ))}
      <button aria-label="Dosya Gezgini" className="flex w-9 items-center justify-center border-b-2 border-[#76b9ed] bg-[#4a5d66] pt-[2px]">
        <ExplorerIcon />
      </button>
      <button aria-label="Chrome" className="mx-1 flex w-7 items-center justify-center border-b-2 border-[#76b9ed] pt-[2px]">
        <ChromeIcon />
      </button>
    </div>

    <div className="ml-auto flex h-full items-center">
      <button className="flex items-center text-[13px]">
        <CloudIcon />
        <span className="ml-2">8°C</span>
        <span className="ml-2">Bulutlu</span>
      </button>
      <button aria-label="Gizli simgeler" className="ml-[11px]">
        <svg viewBox="0 0 12 8" className="h-2 w-3" fill="none" stroke="#fff" strokeWidth="1.300"><path d="M.5 7L6 1.500 11.500 7" /></svg>
      </button>
      <button aria-label="Ses" className="ml-[9px]"><VolumeIcon /></button>
      <button aria-label="Toplantı" className="ml-[10px]"><MeetIcon /></button>
      <button aria-label="Ağ" className="ml-3"><WifiIcon /></button>
      <button aria-label="Pil" className="ml-[7px]"><BatteryIcon /></button>
      <button className="ml-[10px]">TUR</button>
      <button className="ml-3">21:48</button>
      <button aria-label="Bildirimler" className="ml-4"><NoticeIcon /></button>
      <button aria-label="Masaüstünü göster" className="ml-5 h-full w-[5px] border-l border-[#6d7788]" />
    </div>
  </div>
);

export default function App() {
  return (
    <div className="flex h-screen flex-col overflow-hidden bg-white font-['Open_Sans','Noto_Sans',sans-serif] text-[11px] leading-4 text-black">
      <Header />
      <Ribbon />
      <AddressBar />
      <div className="flex min-h-0 flex-1">
        <Sidebar />
        <FileList />
      </div>
      <StatusBar />
      <Taskbar />
    </div>
  );
}
